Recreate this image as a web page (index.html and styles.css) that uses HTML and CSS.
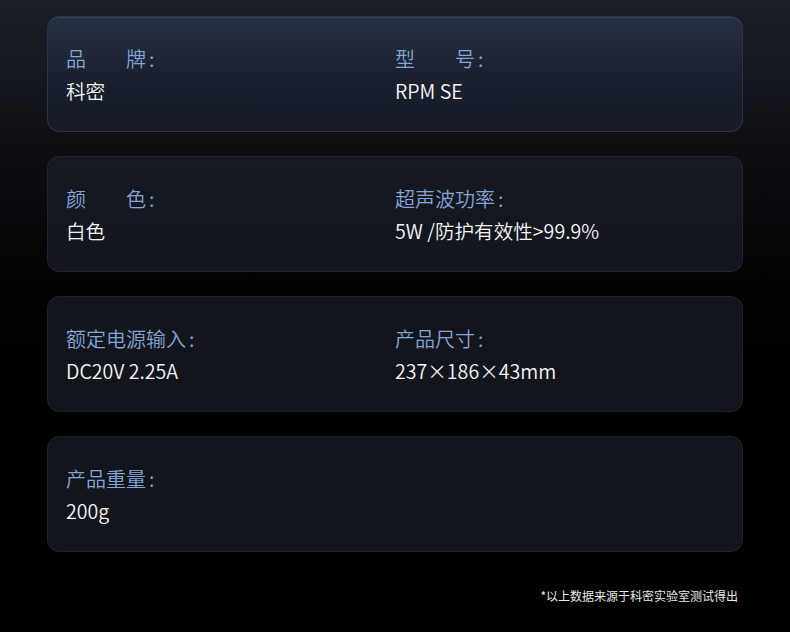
FILE: index.html
```html
<!DOCTYPE html>
<html lang="zh">
<head>
<meta charset="utf-8">
<link rel="stylesheet" href="styles.css">
</head>
<body>
<div class="page">
  <div class="card card-top">
    <div class="col"><div class="label">品&#12288;&#12288;牌<span class="colon">:</span></div><div class="value">科密</div></div>
    <div class="col"><div class="label">型&#12288;&#12288;号<span class="colon">:</span></div><div class="value">RPM SE</div></div>
  </div>
  <div class="card card-2">
    <div class="col"><div class="label">颜&#12288;&#12288;色<span class="colon">:</span></div><div class="value">白色</div></div>
    <div class="col"><div class="label">超声波功率<span class="colon">:</span></div><div class="value">5W /防护有效性&gt;99.9%</div></div>
  </div>
  <div class="card">
    <div class="col"><div class="label">额定电源输入<span class="colon">:</span></div><div class="value">DC20V 2.25A</div></div>
    <div class="col"><div class="label">产品尺寸<span class="colon">:</span></div><div class="value">237×186×43mm</div></div>
  </div>
  <div class="card">
    <div class="col"><div class="label">产品重量<span class="colon">:</span></div><div class="value">200g</div></div>
  </div>
  <div class="note">*以上数据来源于科密实验室测试得出</div>
</div>
</body>
</html>
```
FILE: styles.css
```css
html, body {
  margin: 0;
  padding: 0;
}
body {
  width: 790px;
  height: 632px;
  overflow: hidden;
  background: linear-gradient(180deg, #1c2029 0px, #0d0f14 140px, #030304 280px, #000 400px);
  font-family: "Noto Sans CJK SC", "Noto Sans", sans-serif;
}
.page {
  padding: 16px 47px 0 47px;
  display: flex;
  flex-direction: column;
  gap: 24px;
}
.card {
  box-sizing: border-box;
  height: 116px;
  border-radius: 12px;
  border: 1.5px solid #1d222c;
  background: #12151c;
  display: grid;
  grid-template-columns: 329px 1fr;
  padding: 28px 18px 0 18px;
}
.card-top {
  background: linear-gradient(180deg, #273044 0%, #1b2130 50%, #151a25 100%);
  border-color: #2c3547;
  box-shadow: inset 0 1px 0 rgba(120,140,180,0.15);
}
.card-2 {
  background: linear-gradient(180deg, #151922 0%, #12151d 100%);
  border-color: #1f242e;
}
.label {
  color: #84a5d6;
  font-size: 20px;
  font-weight: 350;
  line-height: 28px;
  white-space: pre;
}
.colon {
  margin-left: 3px;
}
.value {
  color: #f4f4f4;
  font-size: 19.6px;
  font-weight: 350;
  line-height: 28px;
  margin-top: 4px;
}
.note {
  align-self: flex-end;
  margin-top: 12px;
  margin-right: 5px;
  color: #e8e8e8;
  font-size: 12px;
  line-height: 16px;
}
```
